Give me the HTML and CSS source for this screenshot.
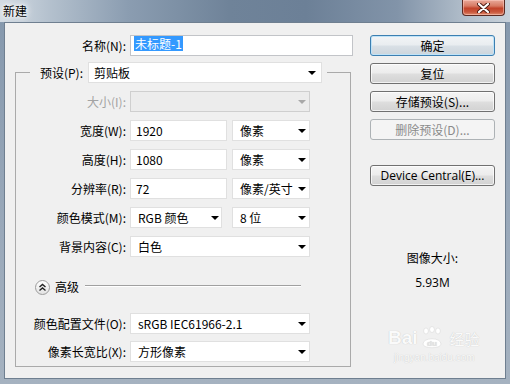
FILE: index.html
```html
<html>
<head>
    <title>新建</title>
    <link rel="stylesheet" href="styles.css">
</head>
<body>
<div class="window">
    <div class="titlebar">
        <span class="title">新建</span>
        <div class="close-btn">
            <svg width="13" height="10" viewBox="0 0 13 10">
                <path d="M2 1 L11 9 M11 1 L2 9" stroke="#4a1a12" stroke-width="4" stroke-linecap="round"/>
                <path d="M2 1 L11 9 M11 1 L2 9" stroke="#fff" stroke-width="2.2" stroke-linecap="round"/>
            </svg>
        </div>
    </div>

    <div class="client">
        <div class="form-col">
            <div class="row name-row">
                <span class="lbl lbl-name">名称(N):</span>
                <div class="field name-field"><span class="sel">未标题-1</span></div>
            </div>

            <fieldset class="group">
                <legend>
                    <span class="lbl-legend">预设(P):</span>
                    <div class="field combo preset">剪贴板</div>
                </legend>
                <div class="group-body">
                    <div class="row">
                        <span class="lbl disabled">大小(I):</span>
                        <div class="field combo w180 off"></div>
                    </div>
                    <div class="row">
                        <span class="lbl">宽度(W):</span>
                        <div class="field num">1920</div>
                        <div class="field combo unit">像素</div>
                    </div>
                    <div class="row">
                        <span class="lbl">高度(H):</span>
                        <div class="field num">1080</div>
                        <div class="field combo unit">像素</div>
                    </div>
                    <div class="row">
                        <span class="lbl">分辨率(R):</span>
                        <div class="field num">72</div>
                        <div class="field combo unit">像素/英寸</div>
                    </div>
                    <div class="row">
                        <span class="lbl">颜色模式(M):</span>
                        <div class="field combo mode">RGB 颜色</div>
                        <div class="field combo unit bits">8 位</div>
                    </div>
                    <div class="row">
                        <span class="lbl">背景内容(C):</span>
                        <div class="field combo w180">白色</div>
                    </div>

                    <div class="advanced">
                        <span class="adv-btn">
                            <svg width="9" height="9" viewBox="0 0 9 9">
                                <path d="M1.5 4 L4.5 1.5 L7.5 4 M1.5 7.5 L4.5 5 L7.5 7.5" fill="none" stroke="#222" stroke-width="1.4"/>
                            </svg>
                        </span>
                        <span class="adv-text">高级</span>
                        <span class="adv-line"></span>
                    </div>

                    <div class="row profile">
                        <span class="lbl">颜色配置文件(O):</span>
                        <div class="field combo w180">sRGB IEC61966-2.1</div>
                    </div>
                    <div class="row aspect">
                        <span class="lbl">像素长宽比(X):</span>
                        <div class="field combo w180">方形像素</div>
                    </div>
                </div>
            </fieldset>
        </div>

        <div class="side-col">
            <div class="btn default">确定</div>
            <div class="btn">复位</div>
            <div class="btn">存储预设(S)...</div>
            <div class="btn off">删除预设(D)...</div>
            <div class="btn device">Device Central(E)...</div>

            <div class="info-title">图像大小:</div>
            <div class="info-value">5.93M</div>
        </div>

        <div class="watermark">
            <div class="wm-top">
                <span class="wm-bai">Bai</span>
                <span class="wm-paw">
                    <svg width="24" height="24" viewBox="0 0 24 24">
                        <ellipse cx="6" cy="5" rx="2.4" ry="3" fill="#fff" stroke="#d8d8d8" stroke-width="0.6"/>
                        <ellipse cx="12" cy="3.5" rx="2.4" ry="3" fill="#fff" stroke="#d8d8d8" stroke-width="0.6"/>
                        <ellipse cx="18" cy="5" rx="2.4" ry="3" fill="#fff" stroke="#d8d8d8" stroke-width="0.6"/>
                        <path d="M3 18 C3 11 21 11 21 18 C21 23 3 23 3 18 Z" fill="#fff" stroke="#d8d8d8" stroke-width="0.6"/>
                        <text x="12" y="20" font-size="8" font-family="Liberation Sans" font-weight="bold" fill="#e4e4e4" text-anchor="middle">du</text>
                    </svg>
                </span>
                <span class="wm-jy">经验</span>
            </div>
            <div class="wm-url">jingyan.baidu.com</div>
        </div>
    </div>
</div>
</body>
</html>
```

FILE: styles.css
```css
*{
    margin: 0;
    box-sizing: border-box;
}
body{
    width: 510px;
    height: 384px;
    overflow: hidden;
    font-family: "Noto Sans CJK SC", sans-serif;
    font-size: 12px;
    color: #000;
}
.window{
    width: 510px;
    height: 384px;
    display: flex;
    flex-direction: column;
    background: linear-gradient(to bottom, #8497ac 0%, #9aa9ba 60%, #a5b2c0 100%);
}

/* title bar */
.titlebar{
    height: 22px;
    display: flex;
    align-items: flex-start;
    background: linear-gradient(to right, #d3dbe3 0%, #b3c0cd 10%, #8b9db1 25%, #6f8399 45%, #6c8097 60%, #8294a9 78%, #b4c0cc 92%, #c8d1da 100%);
}
.title{
    margin-left: 3px;
    margin-top: 3px;
    line-height: 16px;
    font-size: 12px;
    text-shadow: 0 0 6px #fff, 0 0 10px #fff, 0 0 3px #fff;
}
.close-btn{
    margin-left: auto;
    margin-right: 5px;
    width: 43px;
    height: 16px;
    border: 1px solid #5b2a22;
    border-top: none;
    border-radius: 0 0 4px 4px;
    background: linear-gradient(to bottom, #e9a99a 0%, #d77a63 40%, #c2432a 55%, #c9573c 80%, #e08d6f 100%);
    display: flex;
    justify-content: center;
    align-items: center;
    box-shadow: inset 0 0 0 1px rgba(255,210,200,0.5);
}

/* client area */
.client{
    position: relative;
    flex: 1;
    margin: 0 4px 5px 4px;
    border: 1px solid #6f7f90;
    background-color: #f0f0f0;
    display: flex;
    padding-top: 12px;
}
.form-col{
    width: 350px;
}
.row{
    display: flex;
    align-items: center;
    height: 21px;
}
.lbl{
    width: 110px;
    margin-right: 4px;
    text-align: right;
    white-space: nowrap;
}
.lbl-name{
    width: 121px;
}
.disabled{
    color: #a3a3a3;
}
.field{
    height: 21px;
    background-color: #fff;
    border: 1px solid #e0e0e0;
    padding-left: 5px;
    line-height: 19px;
    white-space: nowrap;
    position: relative;
}
.name-field{
    width: 223px;
    border-color: #c2c4c8;
    padding-left: 3px;
}
.sel{
    background-color: #3399ff;
    color: #fff;
    padding: 0 1px;
    display: inline-block;
    line-height: 15px;
}
.combo{
    padding-left: 7px;
}
.combo::after{
    content: "";
    position: absolute;
    right: 3px;
    top: 8px;
    border-left: 4px solid transparent;
    border-right: 4px solid transparent;
    border-top: 4px solid #000;
}
.combo.off{
    background-color: #ececec;
    border-color: #cfcfcf;
}
.combo.off::after{
    border-top-color: #a8a8a8;
}

/* group box */
.group{
    margin: 6px 0 0 10px;
    padding: 0;
    width: 336px;
    border: 1px solid #aaaaaa;
    min-width: 0;
}
.group legend{
    margin-left: 14px;
    padding: 0 5px 0 6px;
    display: flex;
    align-items: center;
    height: 21px;
}
.lbl-legend{
    width: 47px;
    text-align: right;
    white-space: nowrap;
    margin-right: 5px;
}
.preset{
    width: 234px;
    padding-left: 5px;
}
.preset::after{
    right: 5px;
}
.group-body{
    display: flex;
    flex-direction: column;
    gap: 8px;
    padding: 8px 0 4px 0;
}
.w180{
    width: 180px;
}
.num{
    width: 97px;
}
.unit{
    width: 78px;
    margin-left: 5px;
}
.mode{
    width: 92px;
    padding-left: 7px;
}
.mode::after{
    right: 2px;
}
.bits{
    margin-left: 10px;
}
.advanced{
    display: flex;
    align-items: center;
    height: 16px;
    margin-top: 14px;
}
.adv-btn{
    width: 15px;
    height: 15px;
    margin-left: 19px;
    border-radius: 50%;
    border: 1px solid #9c9c9c;
    background: linear-gradient(to bottom, #ffffff, #e2e2e2);
    display: flex;
    justify-content: center;
    align-items: center;
}
.adv-text{
    margin-left: 5px;
    line-height: 16px;
}
.adv-line{
    margin-left: 6px;
    width: 216px;
    height: 2px;
    border-top: 1px solid #a0a0a0;
    border-bottom: 1px solid #fff;
    margin-top: -2px;
}
.profile{
    margin-top: 10px;
}
.aspect{
    margin-top: -1px;
}

/* buttons */
.side-col{
    margin-left: 15px;
    width: 125px;
    display: flex;
    flex-direction: column;
    gap: 7px;
}
.btn{
    height: 21px;
    width: 125px;
    border: 1px solid #707070;
    border-radius: 3px;
    background: linear-gradient(to bottom, #f4f4f4 0%, #ececec 48%, #dedede 52%, #d2d2d2 100%);
    text-align: center;
    line-height: 19px;
    white-space: nowrap;
    box-shadow: inset 0 0 0 1px rgba(255,255,255,0.7);
}
.btn.default{
    border-color: #3c7fb1;
    box-shadow: inset 0 0 0 1px #bfe3f8;
    background: linear-gradient(to bottom, #f2f4f6 0%, #e9edf0 48%, #d9e0e6 52%, #ccd5dc 100%);
}
.btn.off{
    border-color: #adb2b5;
    background: #f4f4f4;
    color: #8a8a8a;
    box-shadow: none;
}
.btn.device{
    margin-top: 18px;
    font-family: "Open Sans", "Noto Sans CJK SC", sans-serif;
}
.info-title{
    margin-top: 57px;
    text-align: center;
    line-height: 16px;
}
.info-value{
    margin-top: 2px;
    text-align: center;
    line-height: 16px;
    font-family: "Open Sans", sans-serif;
}

/* watermark overlay */
.watermark{
    position: absolute;
    left: 383px;
    top: 303px;
    color: #fafafa;
    text-shadow: 0 0 1px rgba(0,0,0,0.22);
}
.wm-top{
    display: flex;
    align-items: center;
}
.wm-bai{
    font-family: "Liberation Sans", sans-serif;
    font-weight: bold;
    font-size: 19px;
}
.wm-paw{
    margin-left: 2px;
    display: flex;
}
.wm-jy{
    margin-left: 6px;
    font-size: 15px;
}
.wm-url{
    margin-top: 2px;
    font-family: "Liberation Sans", sans-serif;
    font-size: 10px;
    margin-left: 6px;
}
```
